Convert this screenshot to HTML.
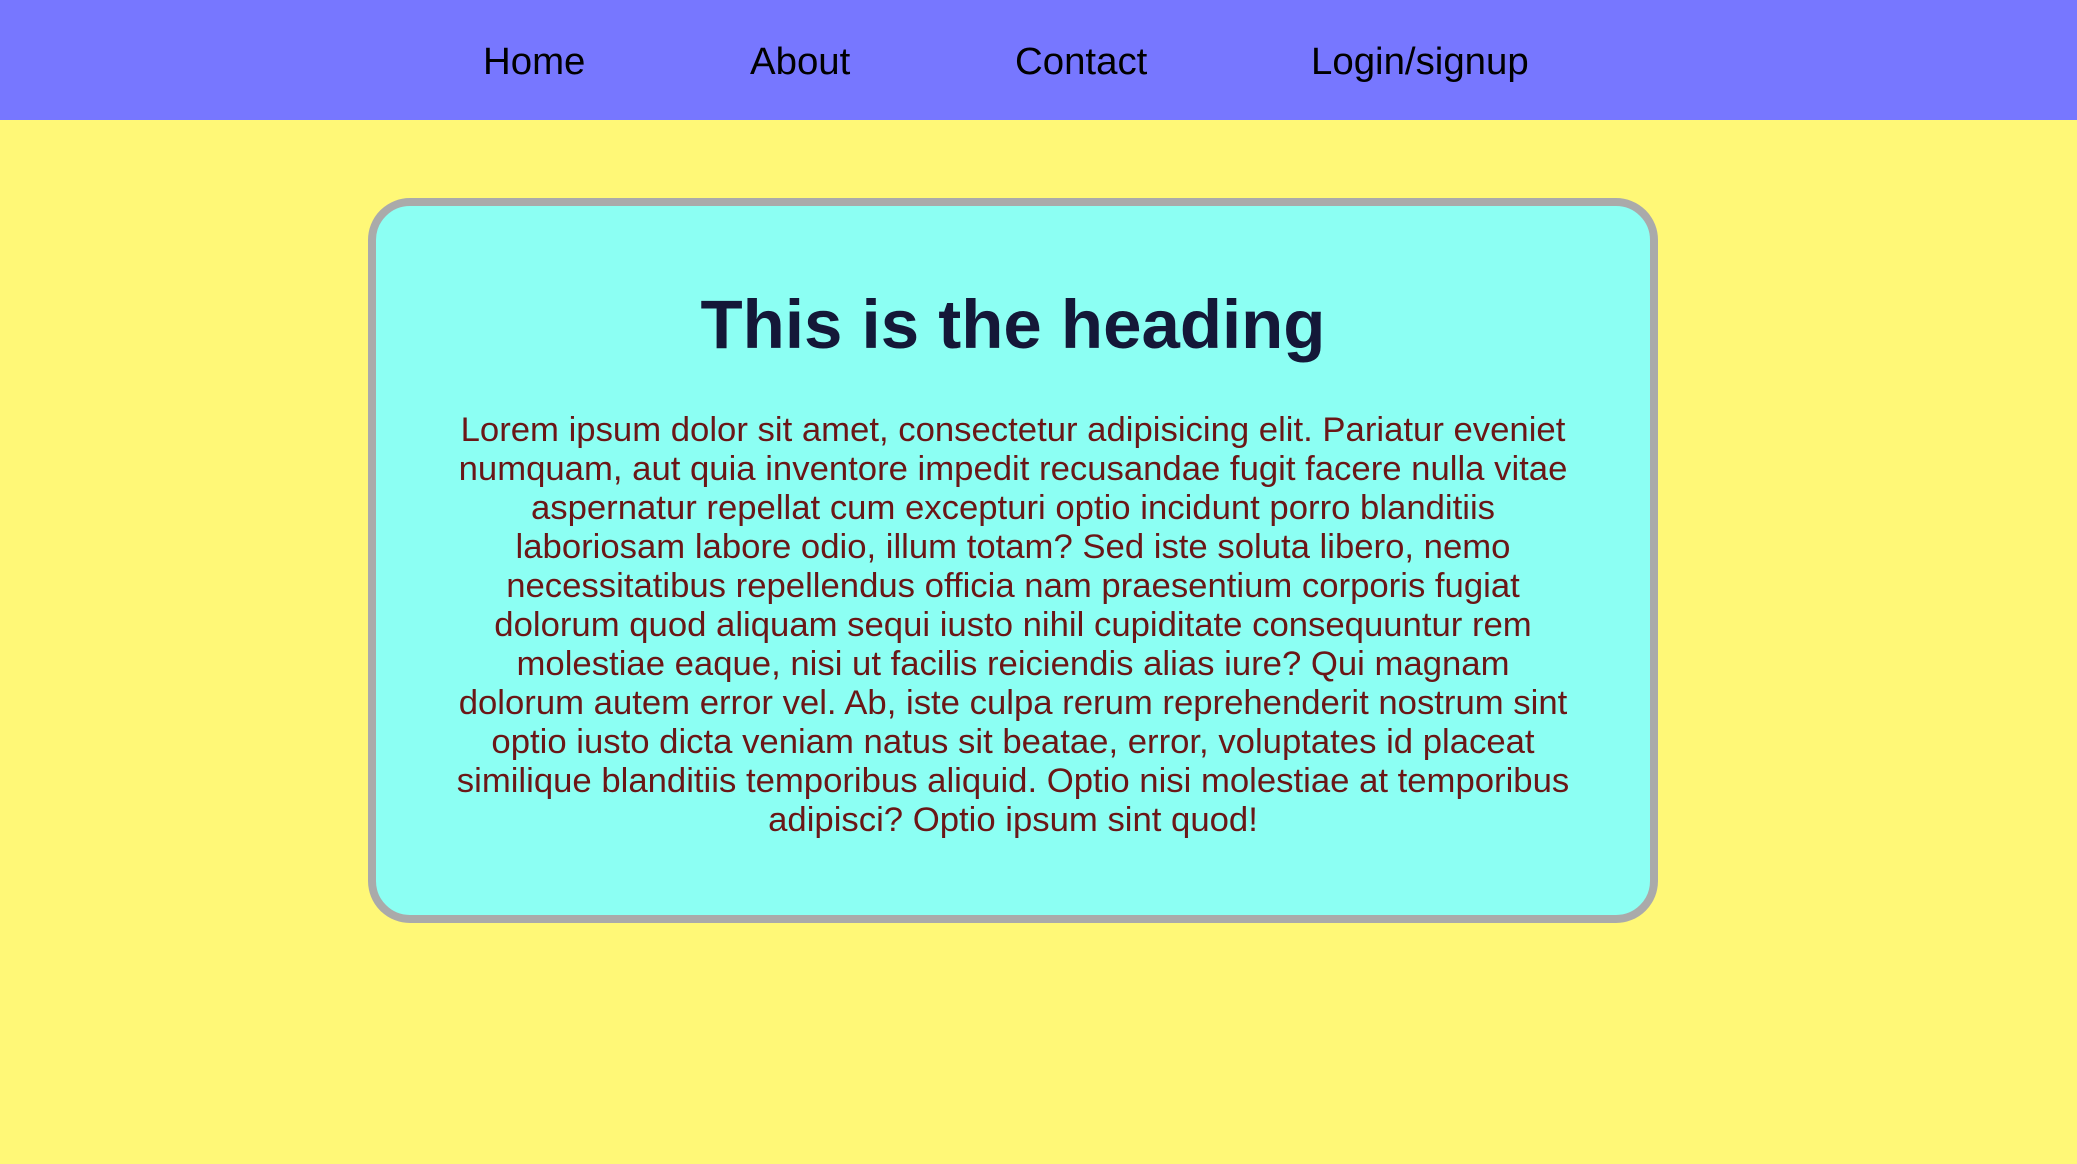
<!DOCTYPE html>
<html><head><meta charset="utf-8"><style>
html,body{margin:0;padding:0}
body{width:2077px;height:1164px;background:#fff877;position:relative;overflow:hidden;font-family:"Liberation Sans",Arial,sans-serif}
.nav{position:absolute;left:0;top:0;width:2077px;height:120px;background:#7777ff}
.nav span{position:absolute;top:2px;line-height:120px;font-size:38.4px;color:#000}
.box{position:absolute;left:368px;top:198px;width:1274px;height:709px;border:8px solid #aaaaaa;border-radius:42px;background:#8cfff3}
h1{position:absolute;left:0;width:100%;top:77px;margin:0;text-align:center;font-size:69px;line-height:84px;color:#141838;font-weight:bold}
p{position:absolute;left:0;width:100%;top:205px;margin:0;text-align:center;font-size:34.7px;line-height:39px;color:#6b1717;white-space:nowrap}
</style></head><body>
<div class="nav">
<span style="left:483px">Home</span>
<span style="left:750px">About</span>
<span style="left:1015px">Contact</span>
<span style="left:1311px">Login/signup</span>
</div>
<div class="box">
<h1>This is the heading</h1>
<p>Lorem ipsum dolor sit amet, consectetur adipisicing elit. Pariatur eveniet<br>numquam, aut quia inventore impedit recusandae fugit facere nulla vitae<br>aspernatur repellat cum excepturi optio incidunt porro blanditiis<br>laboriosam labore odio, illum totam? Sed iste soluta libero, nemo<br>necessitatibus repellendus officia nam praesentium corporis fugiat<br>dolorum quod aliquam sequi iusto nihil cupiditate consequuntur rem<br>molestiae eaque, nisi ut facilis reiciendis alias iure? Qui magnam<br>dolorum autem error vel. Ab, iste culpa rerum reprehenderit nostrum sint<br>optio iusto dicta veniam natus sit beatae, error, voluptates id placeat<br>similique blanditiis temporibus aliquid. Optio nisi molestiae at temporibus<br>adipisci? Optio ipsum sint quod!</p>
</div>
</body></html>
